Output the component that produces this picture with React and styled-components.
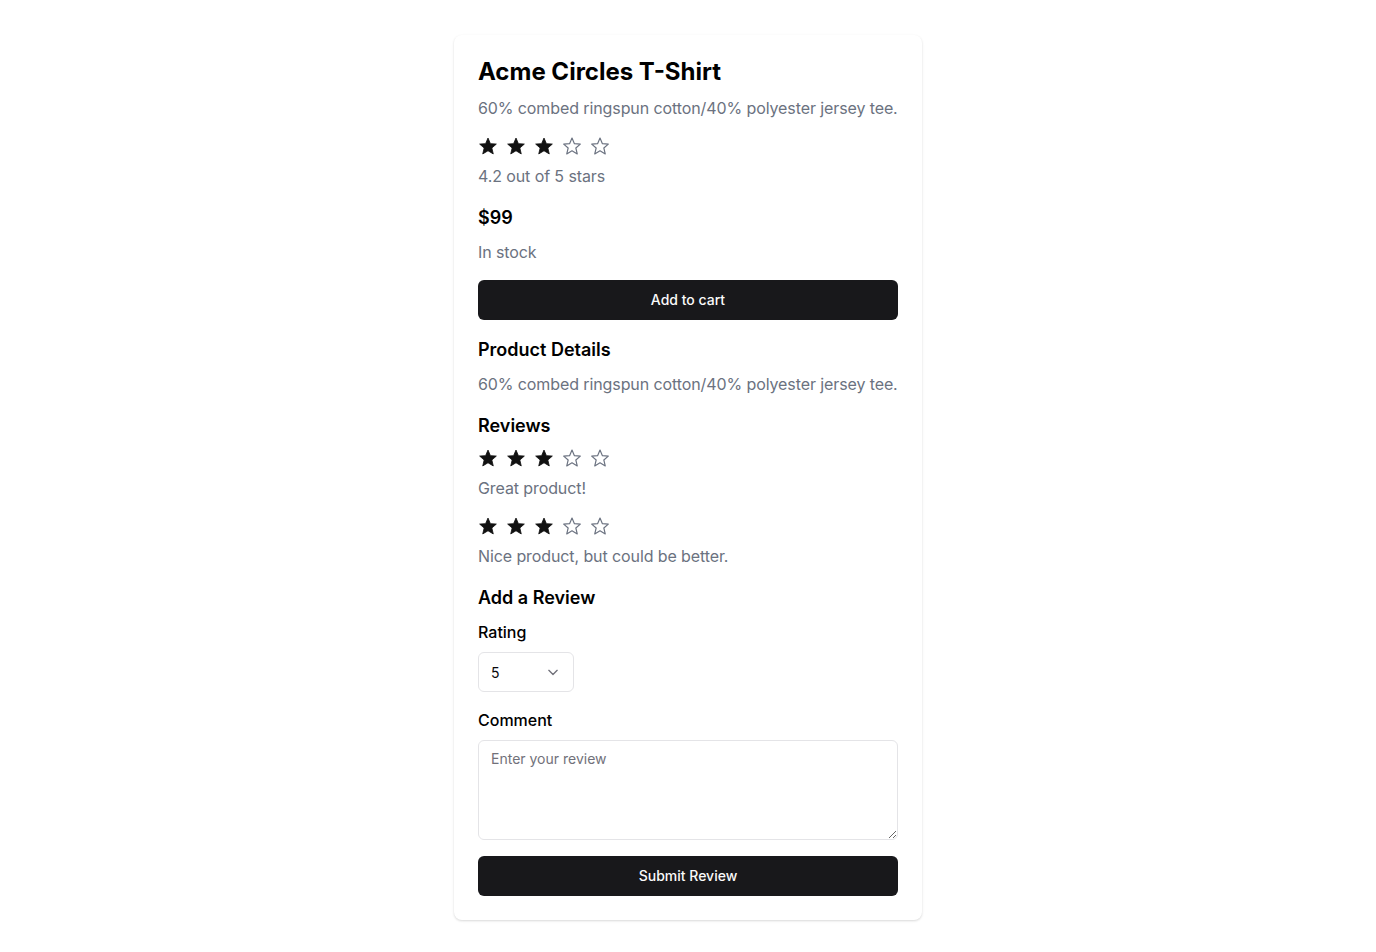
import React, { useState } from "react"
import styled, { createGlobalStyle } from "styled-components"

const GlobalStyle = createGlobalStyle`
  * {
    box-sizing: border-box;
  }

  body {
    margin: 0;
    background: #fff;
    font-family: Inter, "Noto Sans", sans-serif;
    color: #09090b;
  }
`

const Page = styled.div`
  display: flex;
  justify-content: center;
  padding: 35px 0 32px;
`

const Card = styled.div`
  width: 468px;
  display: flex;
  flex-direction: column;
  padding: 21px 24px 24px;
  background: #fff;
  border-radius: 8px;
  box-shadow: 0 1px 3px rgba(0, 0, 0, 0.1), 0 1px 2px rgba(0, 0, 0, 0.06);
`

const Title = styled.h1`
  margin: 0 0 8px;
  font-size: 24px;
  line-height: 32px;
  font-weight: 700;
  color: #000;
`

const Heading = styled.h2`
  margin: 0 0 8px;
  font-size: 18px;
  line-height: 28px;
  font-weight: 600;
  color: #000;
`

const Muted = styled.p`
  margin: 0 0 ${p => (p.$bottom === undefined ? 16 : p.$bottom)}px;
  font-size: 16px;
  line-height: 24px;
  letter-spacing: -0.1px;
  color: #6b7280;
  white-space: nowrap;
`

const Price = styled.div`
  margin: 16px 0 8px;
  font-size: 18px;
  line-height: 28px;
  font-weight: 600;
  color: #000;
`

const StarRow = styled.div`
  display: flex;
  gap: 8px;
  height: 20px;
  margin-bottom: 8px;
`

const Button = styled.button`
  width: 100%;
  height: 40px;
  padding: 0 0 1px;
  border: none;
  border-radius: 6px;
  background: #18181b;
  color: #fafafa;
  font-family: inherit;
  font-size: 14px;
  font-weight: 500;
  cursor: pointer;
  margin-bottom: ${p => p.$bottom || 0}px;
`

const Label = styled.label`
  display: block;
  margin-bottom: 8px;
  font-size: 16px;
  line-height: 24px;
  font-weight: 500;
  color: #000;
`

const SelectWrap = styled.div`
  position: relative;
  width: 96px;
  margin-bottom: 16px;

  svg {
    position: absolute;
    right: 11px;
    top: 10px;
    pointer-events: none;
  }
`

const Select = styled.select`
  width: 100%;
  height: 40px;
  padding: 0 12px;
  appearance: none;
  border: 1px solid #e4e4e7;
  border-radius: 6px;
  background: #fff;
  font-family: inherit;
  font-size: 14px;
  color: #09090b;
  outline: none;
`

const TextArea = styled.textarea`
  display: block;
  width: 100%;
  height: 100px;
  padding: 8px 12px;
  margin-bottom: 16px;
  border: 1px solid #e4e4e7;
  border-radius: 6px;
  font-family: inherit;
  font-size: 14px;
  line-height: 20px;
  color: #09090b;
  outline: none;

  &::placeholder {
    color: #71717a;
  }
`

const StarIcon = ({ filled }) => (
  <svg width="20" height="20" viewBox="0 0 24 24">
    <polygon
      points="12,2.5 14.9,9.2 22,9.7 16.6,14.4 18.3,21.5 12,17.7 5.7,21.5 7.4,14.4 2,9.7 9.1,9.2"
      fill={filled ? "#111" : "none"}
      stroke={filled ? "#111" : "#6b7280"}
      strokeWidth={filled ? 1 : 1.4}
      strokeLinejoin="round"
    />
  </svg>
)

const Stars = ({ value }) => (
  <StarRow>
    {[1, 2, 3, 4, 5].map(n => (
      <StarIcon key={n} filled={n <= value} />
    ))}
  </StarRow>
)

const reviews = [
  { id: 1, rating: 3, text: "Great product!" },
  { id: 2, rating: 3, text: "Nice product, but could be better." },
]

const App = () => {
  const [rating, setRating] = useState("5")
  const [comment, setComment] = useState("")

  return (
    <Page>
      <GlobalStyle />
      <Card>
        <Title>Acme Circles T-Shirt</Title>
        <Muted>60% combed ringspun cotton/40% polyester jersey tee.</Muted>
        <Stars value={3} />
        <Muted $bottom={0}>4.2 out of 5 stars</Muted>
        <Price>$99</Price>
        <Muted>In stock</Muted>
        <Button $bottom={16}>Add to cart</Button>

        <Heading>Product Details</Heading>
        <Muted>60% combed ringspun cotton/40% polyester jersey tee.</Muted>

        <Heading>Reviews</Heading>
        {reviews.map(r => (
          <div key={r.id}>
            <Stars value={r.rating} />
            <Muted>{r.text}</Muted>
          </div>
        ))}

        <Heading>Add a Review</Heading>
        <Label htmlFor="rating">Rating</Label>
        <SelectWrap>
          <Select id="rating" value={rating} onChange={e => setRating(e.target.value)}>
            {["1", "2", "3", "4", "5"].map(v => (
              <option key={v} value={v}>
                {v}
              </option>
            ))}
          </Select>
          <svg width="20" height="20" viewBox="0 0 24 24" fill="none" stroke="#71717a" strokeWidth="1.6" strokeLinecap="round" strokeLinejoin="round">
            <path d="m7 10 5 5 5-5" />
          </svg>
        </SelectWrap>
        <Label htmlFor="comment">Comment</Label>
        <TextArea
          id="comment"
          placeholder="Enter your review"
          value={comment}
          onChange={e => setComment(e.target.value)}
        />
        <Button>Submit Review</Button>
      </Card>
    </Page>
  )
}

export default App
